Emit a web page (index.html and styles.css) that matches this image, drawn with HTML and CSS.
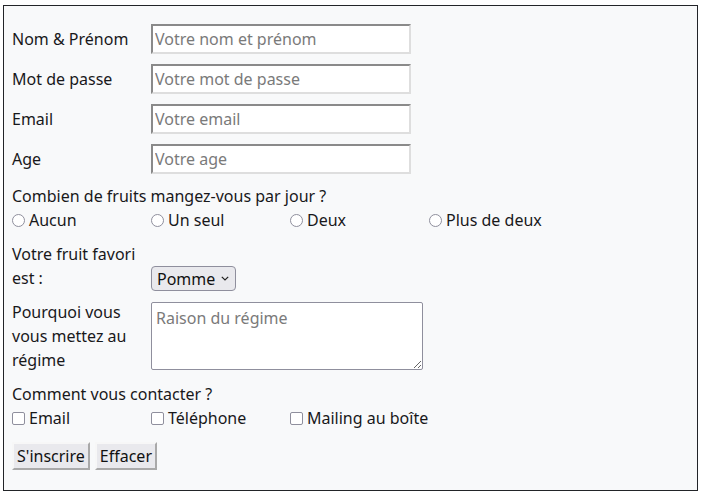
FILE: index.html
```html
<!DOCTYPE html>
<html lang="fr">
<head>
<meta charset="utf-8">
<title>Formulaire</title>
<link rel="stylesheet" href="styles.css">
</head>
<body>
<form class="card">
  <div class="row">
    <label class="lbl" for="nom">Nom &amp; Prénom</label>
    <input class="txt" id="nom" type="text" placeholder="Votre nom et prénom">
  </div>
  <div class="row">
    <label class="lbl" for="mdp">Mot de passe</label>
    <input class="txt" id="mdp" type="password" placeholder="Votre mot de passe">
  </div>
  <div class="row">
    <label class="lbl" for="email">Email</label>
    <input class="txt" id="email" type="email" placeholder="Votre email">
  </div>
  <div class="row">
    <label class="lbl" for="age">Age</label>
    <input class="txt" id="age" type="text" placeholder="Votre age">
  </div>
  <div class="block">
    <div class="line">Combien de fruits mangez-vous par jour ?</div>
    <div class="opts">
      <label class="opt"><input class="radio" type="radio" name="fruits">Aucun</label>
      <label class="opt"><input class="radio" type="radio" name="fruits">Un seul</label>
      <label class="opt"><input class="radio" type="radio" name="fruits">Deux</label>
      <label class="opt"><input class="radio" type="radio" name="fruits">Plus de deux</label>
    </div>
  </div>
  <div class="row row-end">
    <label class="lbl lbl-wrap" for="fruit">Votre fruit favori est :</label>
    <div class="selwrap">
      <select class="sel" id="fruit">
        <option>Pomme</option>
        <option>Poire</option>
        <option>Banane</option>
      </select>
      <svg class="chev" width="8" height="5" viewBox="0 0 8 5"><path d="M0.8 0.8 L4 4 L7.2 0.8" fill="none" stroke="#222" stroke-width="1.2"/></svg>
    </div>
  </div>
  <div class="row">
    <label class="lbl lbl-wrap" for="raison">Pourquoi vous vous mettez au régime</label>
    <textarea class="area" id="raison" placeholder="Raison du régime"></textarea>
  </div>
  <div class="block">
    <div class="line">Comment vous contacter ?</div>
    <div class="opts">
      <label class="opt"><input class="check" type="checkbox">Email</label>
      <label class="opt"><input class="check" type="checkbox">Téléphone</label>
      <label class="opt"><input class="check" type="checkbox">Mailing au boîte</label>
    </div>
  </div>
  <div class="btns">
    <button class="btn" type="submit">S'inscrire</button>
    <button class="btn" type="reset">Effacer</button>
  </div>
</form>
</body>
</html>
```
FILE: styles.css
```css
html, body {
  margin: 0;
  padding: 0;
  background: #ffffff;
}
body {
  padding: 5px 5px 4px 3px;
  font-family: "Noto Sans", "DejaVu Sans", sans-serif;
  font-size: 16px;
  line-height: 24px;
  color: #18181a;
}
.card {
  border: 1px solid #222428;
  background: #f8f9fa;
  padding: 18px 8px 20px 8px;
  display: flex;
  flex-direction: column;
  gap: 10px;
  min-height: 446px;
  box-sizing: border-box;
}
.row {
  display: flex;
  align-items: center;
}
.row-end {
  align-items: flex-end;
}
.lbl {
  width: 139px;
  flex: none;
}
.lbl-wrap {
  width: 128px;
  margin-right: 11px;
}
.txt {
  box-sizing: border-box;
  width: 260px;
  height: 30px;
  margin: 0;
  padding: 1px 2px;
  font: inherit;
  color: #222;
  background: #fff;
  border-style: solid;
  border-width: 2px;
  border-color: #8a8a8a #dedede #dedede #8a8a8a;
  outline: none;
}
.txt::placeholder, .area::placeholder {
  color: #7a7a7a;
}
.opts {
  display: grid;
  grid-template-columns: repeat(4, 139px);
}
.opt {
  display: flex;
  align-items: center;
  gap: 4px;
}
.radio {
  appearance: none;
  -webkit-appearance: none;
  width: 13px;
  height: 13px;
  margin: 0;
  border: 1.5px solid #8f8f9d;
  border-radius: 50%;
  background: #fff;
  box-sizing: border-box;
}
.check {
  appearance: none;
  -webkit-appearance: none;
  width: 13px;
  height: 13px;
  margin: 0;
  border: 1px solid #8f8f9d;
  border-radius: 2px;
  background: #fff;
  box-sizing: border-box;
}
.selwrap {
  position: relative;
  display: flex;
  margin-bottom: -1px;
}
.sel {
  appearance: none;
  -webkit-appearance: none;
  box-sizing: border-box;
  width: 85px;
  height: 25px;
  margin: 0;
  padding: 0 20px 0 5px;
  font: inherit;
  line-height: 22px;
  color: #111;
  background: #e9e9ed;
  border: 1px solid #8f8f9d;
  border-radius: 4px;
}
.chev {
  position: absolute;
  right: 7px;
  top: 10px;
  pointer-events: none;
}
.area {
  box-sizing: border-box;
  width: 272px;
  height: 68px;
  margin: 0;
  padding: 3px 4px;
  font: inherit;
  line-height: 24px;
  background: #fff;
  border: 1px solid #8f8f9d;
  border-radius: 2px;
  resize: both;
}
.btns {
  display: flex;
  gap: 5px;
  margin-top: 2px;
}
.btn {
  box-sizing: border-box;
  height: 28px;
  margin: 0;
  padding: 0 3px;
  font: inherit;
  color: #111;
  background: #e9e9ed;
  border-style: solid;
  border-width: 2px;
  border-color: #f7f7f7 #a9a9a9 #a9a9a9 #f7f7f7;
}
```
